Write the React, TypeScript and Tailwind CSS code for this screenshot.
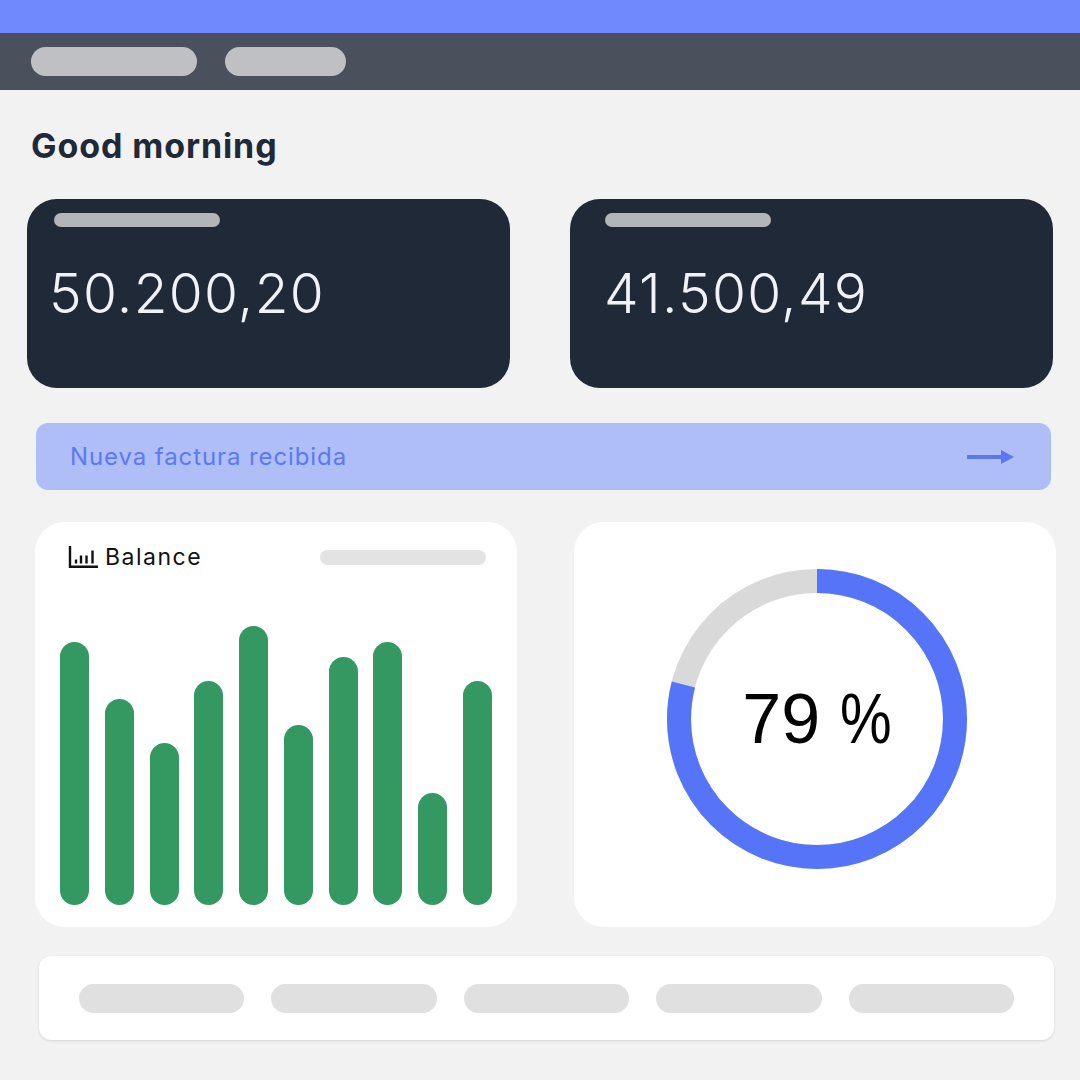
import React from 'react'

const bars = [263, 206, 162, 224, 279, 180, 248, 263, 112, 224]

function BalanceIcon() {
  return (
    <svg width="30" height="22" viewBox="0 0 30 22" fill="none" stroke="#111" strokeWidth="2.4">
      <path d="M2 0v20.8h28" />
      <path d="M8 17.5v-4" />
      <path d="M13 17.5v-8" />
      <path d="M18.5 17.5v-8" />
      <path d="M24.5 17.5v-13" />
    </svg>
  )
}

function Donut({ value }: { value: number }) {
  const r = 138
  const c = 2 * Math.PI * r
  return (
    <div className="relative w-[300px] h-[300px]">
      <svg width="300" height="300" viewBox="0 0 300 300">
        <circle cx="150" cy="150" r={r} fill="none" stroke="#d9d9d9" strokeWidth="24" />
        <circle
          cx="150"
          cy="150"
          r={r}
          fill="none"
          stroke="#5574f7"
          strokeWidth="24"
          strokeDasharray={`${(value / 100) * c} ${c}`}
          transform="rotate(-90 150 150)"
        />
      </svg>
      <div className="absolute inset-0 flex items-center justify-center pl-[10px]">
        <span className="text-[70px] leading-none text-black font-['Liberation_Sans',Arial,sans-serif] whitespace-nowrap">
          {value} <span className="inline-block scale-x-[0.83] origin-left">%</span>
        </span>
      </div>
    </div>
  )
}

export default function App() {
  return (
    <div className="w-[1080px] h-[1080px] bg-[#f2f2f2] overflow-hidden font-['Inter',sans-serif]">
      <div className="h-[33px] bg-[#6e8afc]" />
      <div className="h-[57px] bg-[#4a505c] flex items-center pl-[31px] gap-[28px]">
        <div className="w-[166px] h-[29px] rounded-full bg-[#bfc0c3]" />
        <div className="w-[121px] h-[29px] rounded-full bg-[#bfc0c3]" />
      </div>

      <h1 className="pl-[31px] pt-[36px] text-[34px] leading-[40px] font-bold text-[#1f2937] tracking-[0.9px]">
        Good morning
      </h1>

      <div className="flex gap-[60px] pl-[27px] mt-[33px]">
        {['50.200,20', '41.500,49'].map((n, i) => (
          <div key={n} className={`w-[483px] h-[189px] rounded-[30px] bg-[#1f2937] pt-[14px] ${i === 0 ? 'pl-[27px]' : 'pl-[35px]'}`}>
            <div className="w-[166px] h-[14px] rounded-full bg-[#b4b5b8]" />
            <div className={`mt-[36px] ${i === 0 ? '-ml-[5px]' : '-ml-[1px]'} text-[55px] leading-[60px] font-light text-[#f0f2f7] tracking-[1.3px]`}>{n}</div>
          </div>
        ))}
      </div>

      <div className="ml-[36px] mt-[35px] w-[1015px] h-[67px] rounded-[12px] bg-[#b0bef7] flex items-center justify-between pl-[34px] pr-[36px]">
        <span className="text-[24px] text-[#5c79f2] tracking-[0.9px]">Nueva factura recibida</span>
        <svg width="48" height="16" viewBox="0 0 48 16">
          <path d="M0 8h36" stroke="#5b78f0" strokeWidth="4" />
          <path d="M34 1l13 7-13 7z" fill="#5b78f0" />
        </svg>
      </div>

      <div className="flex gap-[57px] ml-[35px] mt-[32px]">
        <div className="w-[482px] h-[405px] rounded-[30px] bg-white flex flex-col px-[25px] pb-[22px]">
          <div className="flex items-center justify-between pt-[18px] pl-[8px] pr-[6px]">
            <div className="flex items-center gap-[7px]">
              <BalanceIcon />
              <span className="text-[23px] text-[#111] tracking-[1.5px]">Balance</span>
            </div>
            <div className="w-[166px] h-[15px] rounded-full bg-[#e3e3e3]" />
          </div>
          <div className="flex-1 flex items-end justify-between">
            {bars.map((h, i) => (
              <div key={i} className="w-[29px] rounded-full bg-[#339960]" style={{ height: h }} />
            ))}
          </div>
        </div>
        <div className="w-[482px] h-[405px] rounded-[30px] bg-white flex items-start justify-center pt-[47px] pl-[4px]">
          <Donut value={79} />
        </div>
      </div>

      <div className="ml-[39px] mt-[29px] w-[1015px] h-[84px] rounded-[12px] bg-white shadow-sm flex items-center gap-[27px] px-[40px]">
        {[0, 1, 2, 3, 4].map((i) => (
          <div key={i} className="w-[166px] h-[29px] rounded-full bg-[#e0e0e0]" />
        ))}
      </div>
    </div>
  )
}
